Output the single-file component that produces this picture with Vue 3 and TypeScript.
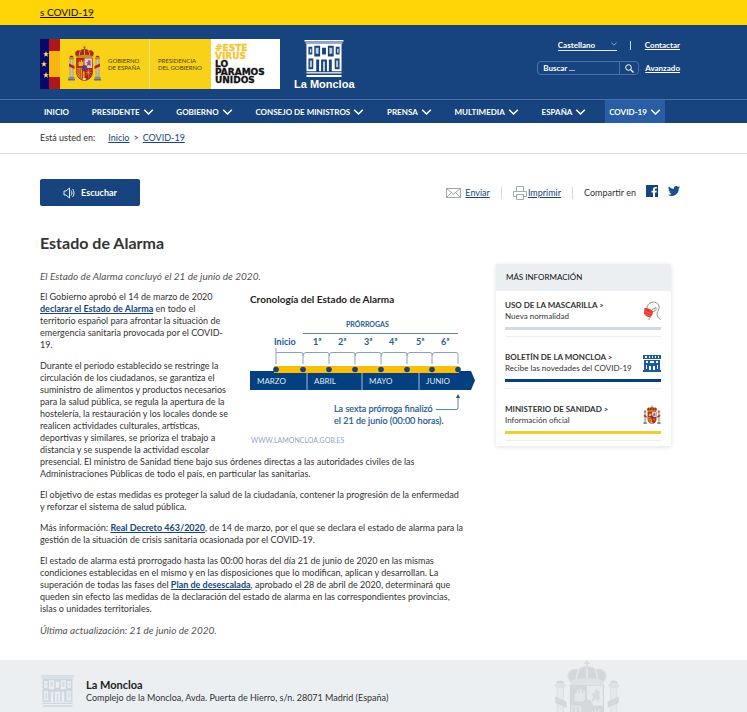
<script setup lang="ts">
import { ref } from 'vue'

interface NavItem {
  label: string
  menu: boolean
  active?: boolean
}

interface Resource {
  title: string
  text: string
  icon: string
  tone: string
}

const nav: NavItem[] = [
  { label: 'INICIO', menu: false },
  { label: 'PRESIDENTE', menu: true },
  { label: 'GOBIERNO', menu: true },
  { label: 'CONSEJO DE MINISTROS', menu: true },
  { label: 'PRENSA', menu: true },
  { label: 'MULTIMEDIA', menu: true },
  { label: 'ESPAÑA', menu: true },
  { label: 'COVID-19', menu: true, active: true },
]

const resources: Resource[] = [
  { title: 'USO DE LA MASCARILLA >', text: 'Nueva normalidad', icon: 'mask', tone: 'grey' },
  { title: 'BOLETÍN DE LA MONCLOA >', text: 'Recibe las novedades del COVID-19', icon: 'castle', tone: 'blue' },
  { title: 'MINISTERIO DE SANIDAD >', text: 'Información oficial', icon: 'arms', tone: 'yellow' },
]

const stops: number[] = [26, 53, 79, 105, 131, 157, 182, 208]
const extensions = [
  { x: 63, label: '1ª' },
  { x: 88, label: '2ª' },
  { x: 114, label: '3ª' },
  { x: 139, label: '4ª' },
  { x: 166, label: '5ª' },
  { x: 191, label: '6ª' },
]
const months = [
  { x: 7, label: 'MARZO' },
  { x: 64, label: 'ABRIL' },
  { x: 119, label: 'MAYO' },
  { x: 176, label: 'JUNIO' },
]

const language = ref('Castellano')
const query = ref('')
</script>

<template>
  <svg class="sprite" aria-hidden="true">
    <symbol id="arms" viewBox="0 0 34 36">
      <g fill="#c9c3b4" stroke="#7b6a5a" stroke-width=".4">
        <rect x="2.5" y="13" width="3" height="18" />
        <rect x="28.5" y="13" width="3" height="18" />
      </g>
      <path d="M1.5 11.5h5v1.6h-5zM27.5 11.5h5v1.6h-5z" fill="#b98a1c" />
      <path d="M2 11.2c0-2 4-2 4 0zM28 11.2c0-2 4-2 4 0z" fill="#a3201d" />
      <path d="M1 31h6v2H1zM27 31h6v2h-6z" fill="#8f8b80" />
      <path d="M.5 33h7v1.6h-7zM26.500 33h7v1.600h-7z" fill="#4d7a8f" />
      <path d="M1.500 17.500l5.500 2.500v3l-5.500-2.500zM32.500 17.500L27 20v3l5.500-2.500z" fill="#b3261e" />
      <path d="M9 12h16v14c0 5-3.500 8-8 8.500-4.500-.5-8-3.500-8-8.500z" fill="#c5251c" stroke="#7d2218" stroke-width=".6" />
      <path d="M17 12.300h7.700V22H17z" fill="#dcc9cd" />
      <path d="M17 22h7.700v4c0 4.300-3.200 7.300-7.700 8z" fill="#b3201b" />
      <path d="M9.300 22H17v12c-4.500-.7-7.700-3.700-7.700-8z" fill="#e8b021" />
      <path d="M10.500 22.500v7M12.600 22.500v9.500M14.800 22.500V33" stroke="#b3201b" stroke-width="1" />
      <path d="M18.500 23.500l5 6M23.500 23.500l-5 6M18 26.500h6M21 23v9" stroke="#e2ae2b" stroke-width=".5" />
      <path d="M11 20v-4h1v-1.500h.8V16h.7v-2h1v2h.7v-1.500h.8V20z" fill="#e5b52a" />
      <path d="M19 20.500l1-3-1.200-1.600 1.700.2.500-2.100 1.400.5 1 1-.7 1.500 1 1.500-1.100.3.500 1.700-1.600-1.500-1 .2z" fill="#a24b83" />
      <ellipse cx="17" cy="22.300" rx="2.400" ry="3" fill="#304f94" stroke="#b3201b" stroke-width=".8" />
      <path d="M15 33c1-1.500 3-1.500 4 0l-2 1.500z" fill="#e7ded6" />
      <path d="M9.500 10.800C5.500 6.500 10 3 13 5c1-2.500 7-2.500 8 0 3-2 7.500 1.500 3.500 5.800z" fill="#b4231b" stroke="#896114" stroke-width=".7" />
      <path d="M13 5c-1.500 2-1.300 4-.5 5.500M21 5c1.500 2 1.300 4 .5 5.500M17 3.500v7" fill="none" stroke="#deb13d" stroke-width=".9" />
      <path d="M9.500 9.700c4.500-1.200 10.500-1.200 15 0v1.900c-4.500-.9-10.500-.9-15 0z" fill="#c08f1d" />
      <path d="M17 0v4M15.700 1.300h2.600" stroke="#8a6616" stroke-width=".8" />
    </symbol>

    <symbol id="palace" viewBox="0 0 42 38">
      <path fill="currentColor" d="M1 0h40v1.500H1zM3 33h36v1.500H3zM3 36h36v2H3z" />
      <path fill="currentColor" opacity=".55" d="M2 2h38v2H2z" />
      <path
        fill="currentColor"
        fill-rule="evenodd"
        d="M3 4h36v28H3zM5 7v8h4V7zM11 6v11h6V6zM19 8v7h4V8zM25 6v11h6V6zM33 7v8h4V7zM5 19v11h5V19zM13 20v12h3V20zM18 20v12h6V20zM26 20v12h3V20zM32 19v11h5V19z"
      />
      <path fill="currentColor" opacity=".75" d="M6.500 9h1.500v4H6.500zM12.500 8h3v6h-3zM26.500 8h3v6h-3zM34.500 9H36v4h-1.500zM6.500 21h2v7h-2zM33.500 21h2v7h-2zM20 22h2v10h-2z" />
    </symbol>

    <symbol id="castle" viewBox="0 0 18 17">
      <path
        fill="currentColor"
        fill-rule="evenodd"
        d="M0 0h18v4H0zM1 5h16v10H1zM0 15h18v2H0zM2 1v2h2V1zM6 1v2h1V1zM9 1v2h1V1zM12 1v2h1V1zM15 1v2h1V1zM3 6v2h2V6zM7 6v2h4V6zM13 6v2h2V6zM3 10v4h1v-4zM6 11v4h2v-4zM10 11v4h2v-4zM14 10v4h1v-4z"
      />
    </symbol>

    <symbol id="mask" viewBox="0 0 18 19">
      <path
        d="M4 7C4 3 7 .7 10.500.700c4 0 6 3 5.500 6.300-.4 2.500-2.200 3.500-2 6 .2 2 1.800 4 3.500 5M8 15.500c-1.500.300-2 1.300-2 3M9 8l4-2"
        fill="none"
        stroke="#777"
        stroke-width=".8"
      />
      <circle cx="12.800" cy="7.500" r="1.300" fill="none" stroke="#999" stroke-width=".6" />
      <path d="M1.500 6.500C4.500 6 8 7.500 10 10c0 2.500-1 4.500-3 5.500-2.500.4-5-1-6-3.500z" fill="#e43b2b" />
      <path d="M9 10.500l3.500-1.500" stroke="#e43b2b" stroke-width=".8" />
      <path d="M2.500 10l5.500 2M2 12.500l4.500 1.500" stroke="#f59384" stroke-width=".5" />
    </symbol>

    <symbol id="chevron" viewBox="0 0 10 6">
      <path d="M.7.800L5 5 9.300.800" fill="none" stroke="currentColor" stroke-width="1.500" />
    </symbol>
  </svg>

  <div class="notice"><a href="#covid">s COVID-19</a></div>

  <header class="header">
    <div class="brand wrap">
      <div class="logos">
        <svg class="government" viewBox="0 0 240 50" role="img" aria-label="Gobierno de España">
          <rect width="240" height="50" fill="#fff" />
          <rect width="10" height="50" fill="#06096b" />
          <rect x="9" width="11" height="50" fill="#b1161b" />
          <rect x="9" y="12" width="11" height="26" fill="#f9b313" />
          <rect x="20" width="151" height="50" fill="#f8d118" />
          <path
            fill="#fbe26e"
            d="M6 12l.8 2.200H9l-1.800 1.300.7 2.200L6 16.400l-1.900 1.300.7-2.200L3 14.200h2.200zM4 22l.8 2.200H7l-1.800 1.300.7 2.200L4 26.400l-1.900 1.300.7-2.200L1 24.200h2.200zM6 33l.8 2.200H9l-1.800 1.300.7 2.200L6 37.400l-1.900 1.300.7-2.200L3 35.200h2.200z"
          />
          <use href="#arms" x="27" y="7" width="35" height="36" />
          <path d="M109.500 0v50" stroke="#eee08a" />
          <g class="ministry">
            <text x="68" y="24">GOBIERNO</text>
            <text x="68" y="31">DE ESPAÑA</text>
            <text x="118" y="24">PRESIDENCIA</text>
            <text x="118" y="31">DEL GOBIERNO</text>
          </g>
          <g class="slogan">
            <text x="175" y="12" class="gold">#ESTE</text>
            <text x="175" y="20" class="gold">VIRUS</text>
            <text x="175" y="28">LO</text>
            <text x="175" y="36">PARAMOS</text>
            <text x="175" y="44">UNIDOS</text>
          </g>
        </svg>
        <div class="moncloa">
          <svg class="palace"><use href="#palace" /></svg>
          <span>La Moncloa</span>
        </div>
      </div>

      <div class="tools">
        <div class="tools-row">
          <span class="language">
            <select v-model="language" aria-label="Idioma">
              <option>Castellano</option>
            </select>
            <svg><use href="#chevron" /></svg>
          </span>
          <span class="divider"></span>
          <a href="#contactar">Contactar</a>
        </div>
        <div class="tools-row">
          <form class="search" @submit.prevent>
            <input v-model="query" type="text" placeholder="Buscar ..." aria-label="Buscar" />
            <button type="submit" aria-label="Buscar">
              <svg viewBox="0 0 9 9">
                <circle cx="3.500" cy="3.500" r="2.800" fill="none" stroke="currentColor" />
                <path d="M5.500 5.500L8.500 8.500" stroke="currentColor" stroke-width="1.200" />
              </svg>
            </button>
          </form>
          <a href="#avanzado">Avanzado</a>
        </div>
      </div>
    </div>

    <nav class="nav">
      <ul class="wrap">
        <li v-for="item in nav" :key="item.label">
          <a href="#" :class="{ active: item.active }">
            {{ item.label }}
            <svg v-if="item.menu"><use href="#chevron" /></svg>
          </a>
        </li>
      </ul>
    </nav>
  </header>

  <div class="crumbs">
    <div class="wrap">
      <span class="here">Está usted en:</span>
      <a href="#inicio">Inicio</a>
      <span>&gt;</span>
      <a href="#covid">COVID-19</a>
    </div>
  </div>

  <main class="wrap main">
    <div class="actions">
      <button class="listen" type="button">
        <svg viewBox="0 0 13 12">
          <path
            d="M1 4h2l3.500-3v10L3 8H1zM8 3.500c1.200 1.200 1.200 3.800 0 5M9.500 2c2 2 2 6 0 8"
            fill="none"
            stroke="currentColor"
            stroke-width=".9"
          />
        </svg>
        Escuchar
      </button>
      <div class="share">
        <a href="#enviar" class="send">
          <svg viewBox="0 0 15 10" class="mail">
            <path d="M.5.500h14v9H.5zM.5.500l7 5.500 7-5.500M.5 9.500l5-5M14.500 9.500l-5-5" fill="none" stroke="#888f98" stroke-width=".8" />
          </svg>
          <span>Enviar</span>
        </a>
        <i></i>
        <a href="#imprimir" class="print">
          <svg viewBox="0 0 14 14" class="printer">
            <path d="M3.500 5V.500h7V5M3.500 10.500h-3v-5h13v5h-3M3.500 8.500h7v5h-7z" fill="none" stroke="#98a1ab" stroke-width=".9" />
          </svg>
          <span>Imprimir</span>
        </a>
        <i></i>
        <span class="share-label">Compartir en</span>
        <a href="#facebook" aria-label="Facebook" class="social">
          <svg viewBox="0 0 12 12">
            <path
              fill="#17447e"
              fill-rule="evenodd"
              d="M0 0h12v12H9V7.500h1.500l.3-1.700H9V4.500c0-.6.300-.9.900-.9h1V2c-2.500-.4-3.900.3-3.900 2.200v1.600H5.500v1.700H7V12H0z"
            />
          </svg>
        </a>
        <a href="#twitter" aria-label="Twitter" class="social">
          <svg viewBox="0 0 24 20">
            <path
              fill="#17508f"
              d="M24 2.400a10 10 0 0 1-2.800.8A4.900 4.900 0 0 0 23.300.5a9.800 9.800 0 0 1-3.100 1.200 4.900 4.900 0 0 0-8.400 4.500A14 14 0 0 1 1.700 1a4.900 4.900 0 0 0 1.500 6.600A4.900 4.900 0 0 1 1 7v.1a4.900 4.900 0 0 0 3.900 4.800 4.900 4.900 0 0 1-2.200.1 4.900 4.900 0 0 0 4.600 3.400A9.900 9.900 0 0 1 0 17.500 14 14 0 0 0 21.500 5a10 10 0 0 0 2.500-2.600z"
            />
          </svg>
        </a>
      </div>
    </div>

    <h1>Estado de Alarma</h1>

    <div class="columns">
      <article class="article">
        <p class="remark">El Estado de Alarma concluyó el 21 de junio de 2020.</p>
        <figure>
          <svg viewBox="0 0 225 156" class="timeline" role="img" aria-label="Cronología del Estado de Alarma">
            <text x="0" y="12" class="chart-title">Cronología del Estado de Alarma</text>
            <text x="96" y="36" class="chart-label small">PRÓRROGAS</text>
            <path d="M53 42.500h155" stroke="#5d83b4" />
            <text x="24" y="54" class="chart-label">Inicio</text>
            <text v-for="e in extensions" :key="e.label" :x="e.x" y="54" class="chart-label">{{ e.label }}</text>
            <g fill="none" stroke="#86a1c6">
              <path d="M26 57v16M26 61.500h25q2 0 2 2V73" />
              <path v-for="n in 6" :key="n" :d="`M${stops[n]} 65q0-3.500 3-3.500H${stops[n + 1] - 2}q2 0 2 2V73`" />
            </g>
            <path d="M0 80h221l4 9.500-4 9.500H0z" fill="#04407f" />
            <rect x="24" y="75" width="185" height="7" fill="#f9bd0b" />
            <circle v-for="x in stops" :key="x" :cx="x" cy="78.500" r="2.800" fill="#174272" />
            <path d="M57 82v17M112 82v17M169 82v17" stroke="#a5bbd4" />
            <text v-for="m in months" :key="m.label" :x="m.x" y="93" class="chart-month">{{ m.label }}</text>
            <text x="84" y="121" class="chart-note">La sexta prórroga finalizó</text>
            <text x="84" y="133" class="chart-note">el 21 de junio (00:00 horas).</text>
            <path d="M186 118.500h20q2 0 2-2V106" fill="none" stroke="#5d83b4" />
            <path d="M206 107l2-4 2 4z" fill="#1c5089" />
            <text x="1" y="152" class="chart-site">WWW.LAMONCLOA.GOB.ES</text>
          </svg>
        </figure>
        <p>
          El Gobierno aprobó el 14 de marzo de 2020 <a href="#decreto">declarar el Estado de Alarma</a> en todo el
          territorio español para afrontar la situación de emergencia sanitaria provocada por el COVID-19.
        </p>
        <p>
          Durante el periodo establecido se restringe la circulación de los ciudadanos, se garantiza el suministro de
          alimentos y productos necesarios para la salud pública, se regula la apertura de la hostelería, la
          restauración y los locales donde se realicen actividades culturales, artísticas, deportivas y similares, se
          prioriza el trabajo a distancia y se suspende la actividad escolar presencial. El ministro de Sanidad tiene
          bajo sus órdenes directas a las autoridades civiles de las Administraciones Públicas de todo el país, en
          particular las sanitarias.
        </p>
        <p>
          El objetivo de estas medidas es proteger la salud de la ciudadanía, contener la progresión de la enfermedad y
          reforzar el sistema de salud pública.
        </p>
        <p>
          Más información: <a href="#real-decreto">Real Decreto 463/2020</a>, de 14 de marzo, por el que se declara el
          estado de alarma para la gestión de la situación de crisis sanitaria ocasionada por el COVID-19.
        </p>
        <p>
          El estado de alarma está prorrogado hasta las 00:00 horas del día 21 de junio de 2020 en las mismas
          condiciones establecidas en el mismo y en las disposiciones que lo modifican, aplican y desarrollan. La
          superación de todas las fases del <a href="#plan">Plan de desescalada</a>, aprobado el 28 de abril de 2020,
          determinará que queden sin efecto las medidas de la declaración del estado de alarma en las correspondientes
          provincias, islas o unidades territoriales.
        </p>
        <p class="remark">Última actualización: 21 de junio de 2020.</p>
      </article>

      <aside class="more">
        <h2>MÁS INFORMACIÓN</h2>
        <ul>
          <li v-for="r in resources" :key="r.icon">
            <a href="#">
              <span class="resource">
                <strong>{{ r.title }}</strong>
                <span>{{ r.text }}</span>
              </span>
              <svg :class="r.icon"><use :href="'#' + r.icon" /></svg>
            </a>
            <span class="bar" :class="r.tone"></span>
          </li>
        </ul>
      </aside>
    </div>
  </main>

  <footer class="footer">
    <div class="wrap">
      <svg class="footer-palace"><use href="#palace" /></svg>
      <address>
        <strong>La Moncloa</strong>
        <span>Complejo de la Moncloa, Avda. Puerta de Hierro, s/n. 28071 Madrid (España)</span>
      </address>
      <svg class="footer-arms"><use href="#arms" /></svg>
    </div>
  </footer>
</template>

<style>
body {
  font-family: Lato, "Liberation Sans", sans-serif;
  font-size: 10px;
  line-height: 12px;
  color: #333;
  background: #fff;
}
</style>

<style scoped>
.sprite {
  display: none;
}
.wrap {
  padding: 0 67px 0 40px;
}
ul {
  list-style: none;
  margin: 0;
  padding: 0;
}
a {
  color: #17447e;
}
svg {
  flex: none;
}
input,
select,
button {
  font: inherit;
  color: inherit;
  border: 0;
  padding: 0;
  margin: 0;
  background: none;
}

.notice {
  background: #ffd507;
  padding: 6px 40px 7px;
}
.notice a {
  color: #111;
}

.header {
  background: #17447e;
  color: #fff;
}
.header a {
  color: #fff;
}
.brand {
  display: flex;
  justify-content: space-between;
  align-items: flex-start;
  padding-top: 14px;
  padding-bottom: 10px;
}
.logos {
  display: flex;
  gap: 14px;
}
.government {
  width: 240px;
  height: 50px;
}
.ministry {
  font-size: 6px;
  fill: #4d430c;
}
.slogan {
  font-family: "DejaVu Sans", sans-serif;
  font-weight: 700;
  font-size: 9px;
  fill: #111;
  stroke: #111;
  stroke-width: 0.3;
}
.slogan .gold {
  fill: #f5c62d;
  stroke: #f5c62d;
}
.moncloa {
  display: flex;
  flex-direction: column;
  align-items: center;
  gap: 1px;
  padding-top: 1px;
  height: 49px;
  font-family: "Liberation Sans", sans-serif;
  font-weight: 700;
  font-size: 11px;
}
.palace {
  width: 42px;
  height: 37px;
}
.tools {
  display: flex;
  flex-direction: column;
  align-items: flex-end;
  gap: 10px;
  font-weight: 700;
  font-size: 8px;
}
.tools-row {
  display: flex;
  align-items: center;
}
.language {
  position: relative;
  display: flex;
  border-bottom: 1px solid #dfe8f2;
}
.language select {
  appearance: none;
  width: 59px;
  height: 11px;
  outline: 0;
}
.language svg {
  position: absolute;
  right: 0;
  top: 3px;
  width: 6px;
  height: 4px;
  color: #8fb3dd;
}
.divider {
  width: 1px;
  height: 9px;
  margin: 0 14px 0 13px;
  background: #b9dcf3;
}
.search {
  display: flex;
  width: 100px;
  height: 12px;
  border: 1px solid #4672a8;
  border-radius: 4px;
  margin-right: 6px;
}
.search input {
  flex: 1;
  min-width: 0;
  padding-left: 5px;
  outline: 0;
}
.search input::placeholder {
  color: #fff;
  opacity: 1;
}
.search button {
  display: flex;
  align-items: center;
  justify-content: center;
  width: 19px;
  border-left: 1px solid #4672a8;
}
.search button svg {
  width: 9px;
  height: 9px;
}

.nav {
  border-top: 1px solid #4a73a9;
}
.nav ul {
  display: flex;
  justify-content: space-between;
  padding-right: 82px;
}
.nav a {
  display: flex;
  align-items: center;
  gap: 3px;
  height: 23px;
  padding: 0 4px;
  font-weight: 700;
  font-size: 8px;
  text-decoration: none;
  white-space: nowrap;
}
.nav a.active {
  background: #285ea6;
}
.nav svg {
  width: 11px;
  height: 6px;
}

.crumbs {
  border-bottom: 1px solid #dcdcdc;
}
.crumbs .wrap {
  display: flex;
  gap: 4px;
  padding-top: 9px;
  padding-bottom: 9px;
  font-size: 9px;
}
.here {
  margin-right: 9px;
}

.actions {
  display: flex;
  justify-content: space-between;
  align-items: center;
  padding-top: 25px;
}
.listen {
  display: flex;
  align-items: center;
  justify-content: center;
  gap: 5px;
  width: 100px;
  height: 27px;
  border-radius: 2px;
  background: #17447e;
  color: #fff;
  font-weight: 700;
  font-size: 9px;
}
.listen svg {
  width: 13px;
  height: 12px;
}
.share {
  display: flex;
  align-items: center;
  font-size: 9px;
}
.share a {
  display: flex;
  align-items: center;
  text-decoration: none;
}
.share a span {
  text-decoration: underline;
}
.share i {
  width: 1px;
  height: 12px;
  margin: 0 11px;
  background: #d5d9de;
}
.send {
  gap: 4px;
}
.print {
  gap: 1px;
}
.mail {
  width: 15px;
  height: 10px;
}
.printer {
  width: 14px;
  height: 14px;
}
.social {
  margin-left: 10px;
  padding-bottom: 4px;
}
.social svg {
  width: 12px;
  height: 12px;
}

h1 {
  margin: 27px 0 11px;
  font-size: 16px;
  line-height: 20px;
  font-weight: 700;
}
.columns {
  display: flex;
  align-items: flex-start;
  gap: 21px;
}
.article {
  flex: 1;
  min-width: 0;
  padding: 6px 10px 0 0;
}
.article p {
  margin: 0 0 9px;
  font-size: 9px;
}
.article p.remark {
  font-size: 10px;
  font-style: italic;
  color: #555;
}
.article a {
  font-weight: 700;
}
figure {
  float: right;
  width: 225px;
  margin: 0 -10px 0 18px;
}
.timeline {
  display: block;
  width: 100%;
}
.chart-title {
  font-size: 10px;
  font-weight: 700;
  fill: #222;
}
.chart-label {
  font-size: 9px;
  font-weight: 700;
  fill: #1f5a96;
}
.chart-label.small {
  font-size: 7px;
}
.chart-month {
  font-size: 8px;
  fill: #dfe9f3;
}
.chart-note {
  font-size: 9px;
  fill: #1f5a96;
  stroke: #1f5a96;
  stroke-width: 0.2;
}
.chart-site {
  font-size: 7px;
  fill: #8fa7c3;
}

.more {
  width: 175px;
  margin-right: 9px;
  box-shadow: 0 1px 5px rgba(0, 0, 0, 0.12);
}
.more h2 {
  margin: 0;
  padding: 7px 10px 8px;
  font-size: 8px;
  font-weight: 400;
  color: #111;
  background: #ebeff2;
}
.more ul {
  padding: 8px 10px 5px 9px;
}
.more li {
  border-bottom: 1px solid #eee;
  padding-bottom: 6px;
  margin-bottom: 14px;
}
.more li:last-child {
  margin-bottom: 0;
}
.more a {
  display: flex;
  justify-content: space-between;
  align-items: center;
  height: 24px;
  color: #333;
  text-decoration: none;
}
.resource {
  display: flex;
  flex-direction: column;
  font-size: 8px;
  line-height: 11px;
  white-space: nowrap;
}
.more svg {
  width: 18px;
  height: 20px;
}
.more svg.castle {
  height: 17px;
  color: #1c5a9c;
}
.bar {
  display: block;
  height: 3px;
  margin-top: 4px;
}
.grey {
  background: #d5dae1;
}
.blue {
  background: #04407f;
}
.yellow {
  background: #ecd02e;
}

.footer {
  margin-top: 15px;
  background: #ebeff2;
  overflow: hidden;
}
.footer .wrap {
  position: relative;
  display: flex;
  align-items: center;
  gap: 11px;
  padding-top: 15px;
  padding-bottom: 5px;
}
.footer-palace {
  width: 35px;
  height: 32px;
  color: #cdd7e0;
}
address {
  display: flex;
  flex-direction: column;
  font-style: normal;
  font-size: 9px;
  line-height: 13px;
}
address strong {
  font-size: 11px;
  color: #222;
}
.footer-arms {
  position: absolute;
  right: 125px;
  top: 0;
  width: 70px;
  height: 75px;
  filter: grayscale(1);
  opacity: 0.13;
}
</style>
